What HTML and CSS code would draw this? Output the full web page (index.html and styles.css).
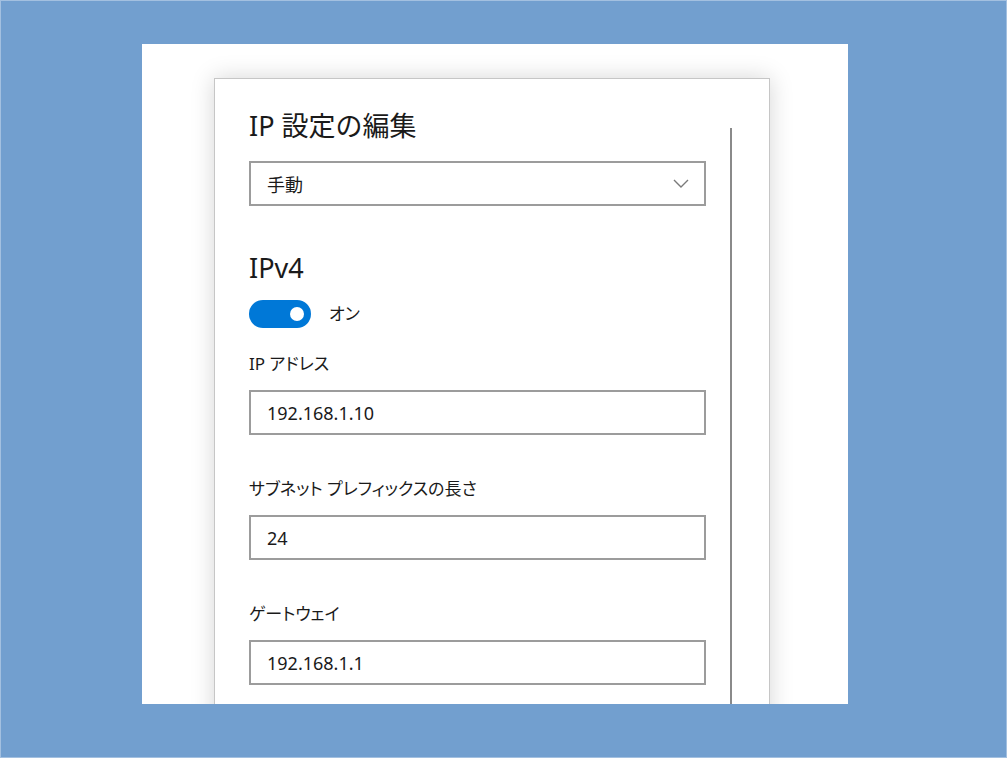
FILE: index.html
```html
<!DOCTYPE html>
<html lang="ja">
<head>
<meta charset="utf-8">
<title>IP 設定の編集</title>
<link rel="stylesheet" href="styles.css">
</head>
<body>
<div class="frame">
  <div class="panel">
    <div class="card">
      <div class="content">
        <h1 class="title">IP 設定の編集</h1>
        <div class="select">
          <span>手動</span>
          <svg class="chevron" width="16" height="9" viewBox="0 0 16 9"><path d="M1 1 L8 8 L15 1" fill="none" stroke="#7a7a7a" stroke-width="1.4"/></svg>
        </div>
        <h2 class="section">IPv4</h2>
        <div class="toggle-row">
          <div class="toggle"><div class="knob"></div></div>
          <span class="toggle-label">オン</span>
        </div>
        <div class="field">
          <div class="label">IP アドレス</div>
          <input class="input" type="text" value="192.168.1.10">
        </div>
        <div class="field">
          <div class="label">サブネット プレフィックスの長さ</div>
          <input class="input" type="text" value="24">
        </div>
        <div class="field">
          <div class="label">ゲートウェイ</div>
          <input class="input" type="text" value="192.168.1.1">
        </div>
      </div>
      <div class="scrollbar"></div>
    </div>
  </div>
</div>
</body>
</html>
```

FILE: styles.css
```css
html, body {
  margin: 0;
  padding: 0;
}
body {
  width: 1007px;
  height: 758px;
  overflow: hidden;
  background: #729fcf;
  font-family: "Noto Sans", "Noto Sans CJK JP", sans-serif;
  color: #1a1a1a;
}
.frame {
  width: 1007px;
  height: 758px;
  box-sizing: border-box;
  box-shadow: inset 0 0 0 1px #a3c0e0;
  padding: 44px 0 0 142px;
}
.panel {
  width: 706px;
  height: 660px;
  background: #ffffff;
  overflow: hidden;
  box-sizing: border-box;
  padding: 34px 0 0 72px;
}
.card {
  width: 556px;
  height: 720px;
  box-sizing: border-box;
  border: 1px solid #c6c6c6;
  background: #fff;
  box-shadow: 0 0 22px rgba(0, 0, 0, 0.17);
  display: flex;
  padding: 29px 0 0 34px;
}
.content {
  width: 457px;
  display: flex;
  flex-direction: column;
}
.scrollbar {
  width: 2px;
  background: #8a8a8a;
  margin-left: 24px;
  margin-top: 20px;
}
.title {
  margin: 0;
  font-size: 27px;
  font-weight: 400;
  line-height: 36px;
  height: 36px;
}
.select {
  margin-top: 17px;
  height: 45px;
  box-sizing: border-box;
  border: 2px solid #9c9c9c;
  display: flex;
  align-items: center;
  justify-content: space-between;
  padding: 0 15px 0 16px;
  font-size: 18px;
  font-feature-settings: "palt";
}
.chevron {
  display: block;
}
.section {
  margin: 44px 0 0;
  font-size: 27px;
  font-weight: 400;
  line-height: 36px;
  height: 36px;
}
.toggle-row {
  margin-top: 14px;
  display: flex;
  align-items: center;
  gap: 18px;
}
.toggle {
  width: 62px;
  height: 28px;
  border-radius: 14px;
  background: #0078d7;
  display: flex;
  align-items: center;
  justify-content: flex-end;
  padding-right: 7px;
  box-sizing: border-box;
}
.knob {
  width: 14px;
  height: 14px;
  border-radius: 50%;
  background: #fff;
}
.toggle-label {
  font-size: 17px;
  line-height: 24px;
  font-feature-settings: "palt";
}
.field {
  margin-top: 24px;
  display: flex;
  flex-direction: column;
}
.field + .field {
  margin-top: 42px;
}
.label {
  font-size: 17px;
  line-height: 24px;
  font-feature-settings: "palt";
}
.input {
  margin: 14px 0 0;
  height: 45px;
  box-sizing: border-box;
  border: 2px solid #9c9c9c;
  border-radius: 0;
  background: #fff;
  padding: 0 16px;
  font-family: "Noto Sans", "Noto Sans CJK JP", sans-serif;
  font-size: 18px;
  color: #1a1a1a;
  outline: none;
  appearance: none;
}
```
